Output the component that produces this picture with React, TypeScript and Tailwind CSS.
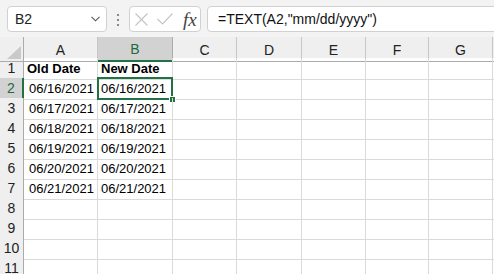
import React from 'react';

const cols = ['A', 'B', 'C', 'D', 'E', 'F', 'G'];

const rows: [string, string][] = [
    ['Old Date', 'New Date'],
    ['06/16/2021', '06/16/2021'],
    ['06/17/2021', '06/17/2021'],
    ['06/18/2021', '06/18/2021'],
    ['06/19/2021', '06/19/2021'],
    ['06/20/2021', '06/20/2021'],
    ['06/21/2021', '06/21/2021'],
    ['', ''],
    ['', ''],
    ['', ''],
    ['', ''],
];

const ui = { fontFamily: '"Liberation Sans", Arial, sans-serif' };

function FormulaBar() {
    return (
        <div className="flex h-[37px] items-start bg-[#f3f3f3] pt-[6px]" style={ui}>
            {/* Name box */}
            <div className="ml-[7px] flex h-[26px] w-[100px] items-center justify-between rounded-[4px] border border-[#d1d1d1] bg-white pl-[7px] pr-[6px] text-[14px] text-[#222]">
                <span>B2</span>
                <svg width="9" height="6" viewBox="0 0 9 6" fill="none" stroke="#555" strokeWidth="1.1">
                    <path d="M0.5 0.8 L4.5 4.8 L8.5 0.8" />
                </svg>
            </div>

            {/* Grip dots */}
            <div className="flex w-[22px] flex-col items-center gap-[3px] pt-[8px]">
                <div className="h-[2px] w-[2px] bg-[#8a8a8a]" />
                <div className="h-[2px] w-[2px] bg-[#8a8a8a]" />
                <div className="h-[2px] w-[2px] bg-[#8a8a8a]" />
            </div>

            {/* Cancel / enter / fx */}
            <div className="flex h-[26px] w-[72px] items-center rounded-[4px] border border-[#d1d1d1] bg-white pl-[5px]">
                <svg width="13" height="13" viewBox="0 0 13 13" fill="none" stroke="#c4c4c4" strokeWidth="1.1">
                    <path d="M0.5 0.5 L12.5 12.5 M12.5 0.5 L0.5 12.5" />
                </svg>
                <svg className="ml-[9px]" width="16" height="12" viewBox="0 0 16 12" fill="none" stroke="#c4c4c4" strokeWidth="1.1">
                    <path d="M0.5 6 L5.5 11 L15.5 0.5" />
                </svg>
                <span
                    className="ml-[10px] text-[19px] italic leading-none text-[#444]"
                    style={{ fontFamily: '"Liberation Serif", "Times New Roman", serif' }}
                >
                    fx
                </span>
            </div>

            {/* Formula input */}
            <div className="ml-[6px] -mr-[8px] flex h-[26px] flex-1 items-center rounded-[4px] border border-[#d1d1d1] bg-white pl-[10px] text-[14px] text-[#111]">
                =TEXT(A2,"mm/dd/yyyy")
            </div>
        </div>
    );
}

function Sheet() {
    const grid = 'grid grid-cols-[24px_74px_75px_64px_65px_64px_63px_64px_10px]';
    return (
        <div className="bg-white">
            {/* Column headers */}
            <div className={`${grid} h-[21px] bg-[#efefef]`} style={ui}>
                <div className="relative border-b border-r border-[#ababab]">
                    <svg className="absolute bottom-[2px] right-[2px]" width="14" height="13" viewBox="0 0 14 13">
                        <path d="M14 0 L14 13 L0 13 Z" fill="#c9c9c9" />
                    </svg>
                </div>
                {cols.map((c) => {
                    const sel = c === 'B';
                    return (
                        <div
                            key={c}
                            className={
                                sel
                                    ? 'flex items-center justify-center border-b-2 border-r border-b-[#217346] border-r-[#ababab] bg-[#d2d2d2] pt-[2px] text-[14px] text-[#1d6b40]'
                                    : 'flex items-center justify-center border-b border-r border-b-[#ababab] border-r-[#c6c6c6] pt-[2px] text-[14px] text-[#222]'
                            }
                        >
                            {c}
                        </div>
                    );
                })}
                <div className="border-b border-[#ababab]" />
            </div>

            {/* Rows */}
            {rows.map(([a, b], i) => {
                const n = i + 1;
                const selRow = n === 2;
                const head = n === 1;
                return (
                    <div key={n} className={`${grid} h-[20px]`}>
                        <div
                            className={
                                selRow
                                    ? 'flex items-center justify-center border-b border-r-2 border-b-[#c6c6c6] border-r-[#217346] bg-[#d2d2d2] text-[14px] text-[#1d6b40]'
                                    : 'flex items-center justify-center border-b border-r border-b-[#c6c6c6] border-r-[#ababab] bg-[#efefef] text-[14px] text-[#222]'
                            }
                            style={ui}
                        >
                            {n}
                        </div>
                        <div
                            className={`flex items-center border-b border-r border-[#dadada] text-[13px] text-black ${head ? 'pl-[3px] font-bold' : 'justify-end pr-[3px]'}`}
                            style={ui}
                        >
                            {a}
                        </div>
                        <div
                            className={`relative flex items-center border-b border-r border-[#dadada] pl-[3px] text-[13px] text-black ${head ? 'font-bold' : ''}`}
                            style={ui}
                        >
                            {b}
                            {selRow && (
                                <>
                                    <div className="absolute -bottom-[1px] -left-[1px] -right-[1px] -top-[1px] border-2 border-[#217346]" />
                                    <div className="absolute -bottom-[4px] -right-[4px] h-[7px] w-[7px] border border-white bg-[#217346]" />
                                </>
                            )}
                        </div>
                        {cols.slice(2).map((c) => (
                            <div key={c} className="border-b border-r border-[#dadada]" />
                        ))}
                        <div className="border-b border-[#dadada]" />
                    </div>
                );
            })}
        </div>
    );
}

export default function App() {
    return (
        <div className="h-[274px] w-[494px] overflow-hidden bg-white">
            <FormulaBar />
            <Sheet />
        </div>
    );
}
